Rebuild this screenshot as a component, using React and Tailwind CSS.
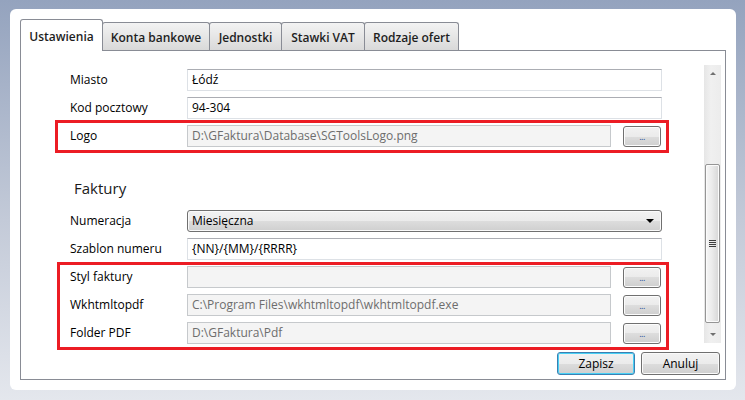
import React from 'react';

const tabs = [
  { name: 'Ustawienia', w: 'w-[83px]' },
  { name: 'Konta bankowe', w: 'w-[108px]' },
  { name: 'Jednostki', w: 'w-[73px]' },
  { name: 'Stawki VAT', w: 'w-[84px]' },
  { name: 'Rodzaje ofert', w: 'w-[95px]' },
];

const btnBg =
  'bg-[linear-gradient(#f2f2f2_0%,#ebebeb_50%,#dddddd_50%,#cfcfcf_100%)]';

function Label({ children }) {
  return <div className="w-[117px] shrink-0 text-[12px] text-black">{children}</div>;
}

function TextInput({ value, disabled, width = 'w-[475px]' }) {
  return (
    <div
      className={`${width} h-[22px] border px-[4px] text-[12px] leading-[20px] truncate ${
        disabled
          ? 'bg-[#f4f4f4] border-[#c6c9cc] text-[#6d6d6d]'
          : 'bg-white border-[#dde1e6] border-t-[#abadb3] text-black'
      }`}
    >
      {value}
    </div>
  );
}

function DotsButton() {
  return (
    <div
      className={`ml-[12px] w-[38px] h-[21px] rounded-[3px] border border-[#707070] ${btnBg} flex items-end justify-center shadow-[inset_0_0_0_1px_#fcfcfc]`}
    >
      <span className="text-[9px] leading-none text-[#1c4f9c] tracking-[-0.5px] pb-[5px]">...</span>
    </div>
  );
}

function Row({ label, children }) {
  return (
    <div className="flex items-center h-[22px] mb-[6px]">
      <Label>{label}</Label>
      {children}
    </div>
  );
}

function Arrow({ up }) {
  return (
    <div className="h-[17px] flex items-center justify-center">
      <div
        className={`w-0 h-0 border-l-[3px] border-r-[3px] border-l-transparent border-r-transparent ${
          up ? 'border-b-[3px] border-b-[#707070]' : 'border-t-[3px] border-t-[#707070]'
        }`}
      />
    </div>
  );
}

export default function App() {
  return (
    <div
      className="relative w-[745px] h-[400px] overflow-hidden bg-[linear-gradient(#94a3be,#c3cad8_55%,#e4e7ed)] pt-[9px] pl-[10px]"
      style={{ fontFamily: '"Open Sans", "Noto Sans", sans-serif' }}
    >
      <div className="w-[726px] h-[381px] bg-white rounded-[6px] pl-[10px] pt-[10px]">
        {/* tabs */}
        <div className="flex items-end h-[31px]">
          {tabs.map((t, i) =>
            i === 0 ? (
              <div
                key={t.name}
                className={`${t.w} h-[32px] -mb-[1px] relative z-10 bg-white border border-b-0 border-[#898c95] rounded-t-[3px] flex items-center justify-center text-[12px] font-semibold text-[#1e1e1e] pt-[2px]`}
              >
                {t.name}
              </div>
            ) : (
              <div
                key={t.name}
                className={`${t.w} h-[28px] -ml-[1px] border border-b-0 border-[#898c95] rounded-t-[3px] bg-[linear-gradient(#f3f3f3,#e6e6e6_50%,#d9d9d9)] flex items-center justify-center text-[12px] font-semibold text-[#1e1e1e] pt-[2px]`}
              >
                {t.name}
              </div>
            )
          )}
        </div>

        {/* panel */}
        <div className="w-[706px] h-[330px] border border-[#898c95] flex flex-col">
          <div className="flex h-[292px]">
            <div className="flex-1 pl-[49px] pt-[18px]">
              <Row label="Miasto">
                <TextInput value="Łódź" />
              </Row>
              <Row label="Kod pocztowy">
                <TextInput value="94-304" />
              </Row>
              <Row label="Logo">
                <TextInput value="D:\GFaktura\Database\SGToolsLogo.png" disabled width="w-[424px]" />
                <DotsButton />
              </Row>

              <div className="mt-[31px] mb-[12px] ml-[4px] h-[20px] text-[15px] leading-[20px] text-[#1a1a1a]">
                Faktury
              </div>

              <Row label="Numeracja">
                <div
                  className={`w-[475px] h-[22px] rounded-[3px] border border-[#707070] ${btnBg} flex items-center justify-between pl-[4px] pr-[7px] text-[12px] text-black shadow-[inset_0_0_0_1px_#fafafa]`}
                >
                  <span>Miesięczna</span>
                  <div className="w-0 h-0 border-l-[4px] border-r-[4px] border-t-[4px] border-l-transparent border-r-transparent border-t-black" />
                </div>
              </Row>
              <Row label="Szablon numeru">
                <TextInput value="{NN}/{MM}/{RRRR}" />
              </Row>
              <Row label="Styl faktury">
                <TextInput value="" disabled width="w-[424px]" />
                <DotsButton />
              </Row>
              <Row label="Wkhtmltopdf">
                <TextInput
                  value="C:\Program Files\wkhtmltopdf\wkhtmltopdf.exe"
                  disabled
                  width="w-[424px]"
                />
                <DotsButton />
              </Row>
              <Row label="Folder PDF">
                <TextInput value="D:\GFaktura\Pdf" disabled width="w-[424px]" />
                <DotsButton />
              </Row>
            </div>

            {/* scrollbar */}
            <div className="w-[17px] mt-[14px] h-[278px] mr-[4px] bg-[linear-gradient(90deg,#e6e6e6,#f0f0f0_40%,#ececec)] flex flex-col">
              <Arrow up />
              <div className="flex-1 px-[1px]">
                <div className="mt-[82px] h-[159px] rounded-[2px] border border-[#959595] bg-[linear-gradient(90deg,#f6f6f6,#ebebeb_45%,#d6d6d6)] shadow-[inset_0_0_0_1px_#fbfbfb] flex flex-col items-center justify-center gap-[1px]">
                  <div className="w-[7px] h-[1px] bg-[#3c3c3c]" />
                  <div className="w-[7px] h-[1px] bg-[#3c3c3c]" />
                  <div className="w-[7px] h-[1px] bg-[#3c3c3c]" />
                  <div className="w-[7px] h-[1px] bg-[#3c3c3c]" />
                </div>
              </div>
              <Arrow />
            </div>
          </div>

          {/* buttons */}
          <div className="flex justify-end gap-[6px] pr-[5px] mt-[9px]">
            <div
              className={`w-[78px] h-[23px] rounded-[3px] border border-[#3c7fb1] ${btnBg} shadow-[inset_0_0_0_1px_#48d0f5] flex items-center justify-center text-[12px] text-black`}
            >
              Zapisz
            </div>
            <div
              className={`w-[79px] h-[23px] rounded-[3px] border border-[#707070] ${btnBg} shadow-[inset_0_0_0_1px_#fafafa] flex items-center justify-center text-[12px] text-black`}
            >
              Anuluj
            </div>
          </div>
        </div>
      </div>

      {/* red annotation boxes */}
      <div className="absolute left-[55px] top-[120px] w-[614px] h-[33px] border-[3px] border-[#ec1c24] pointer-events-none" />
      <div className="absolute left-[57px] top-[262px] w-[612px] h-[88px] border-[3px] border-[#ec1c24] pointer-events-none" />
    </div>
  );
}
